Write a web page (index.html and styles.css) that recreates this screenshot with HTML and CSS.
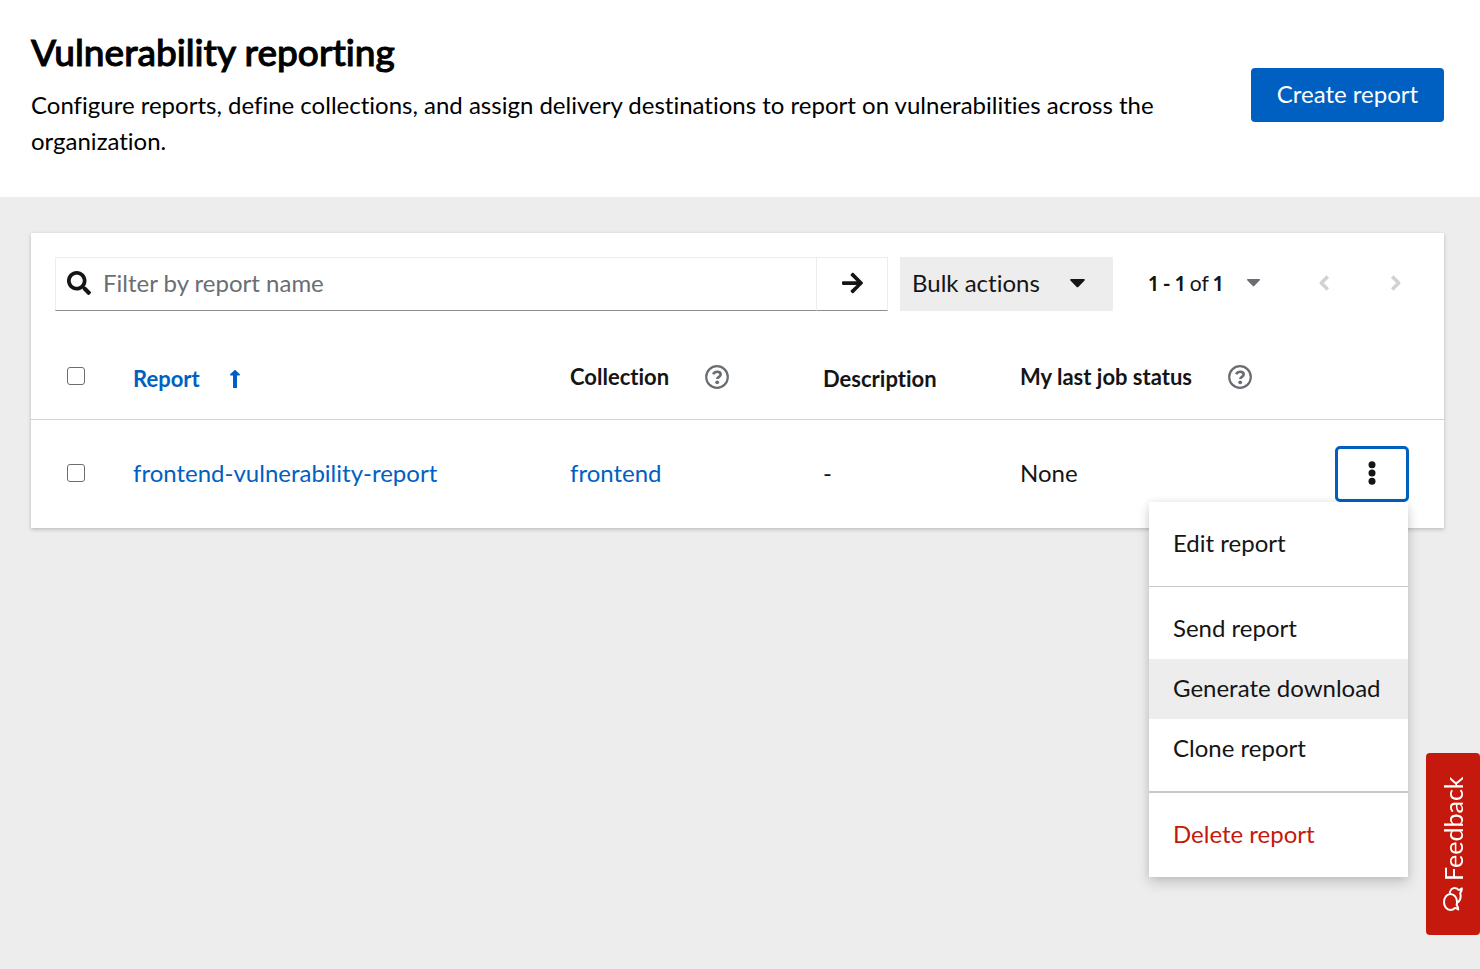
FILE: index.html
```html
<!DOCTYPE html>
<html lang="en">
<head>
<meta charset="utf-8">
<meta name="viewport" content="width=device-width, initial-scale=1">
<title>Vulnerability reporting</title>
<link rel="stylesheet" href="styles.css">
</head>
<body>
<header class="page-header">
  <div class="page-intro">
    <h1 class="page-title">Vulnerability reporting</h1>
    <p class="page-description">Configure reports, define collections, and assign delivery destinations to report on vulnerabilities across the organization.</p>
  </div>
  <button class="create-button" type="button">Create report</button>
</header>

<main class="page-main">
  <section class="card">
    <div class="toolbar">
      <form class="search">
        <label class="search-field">
          <svg class="search-icon" viewBox="0 0 512 512" width="24" height="24" fill="currentColor" aria-hidden="true"><path d="M505 442.700 405.300 343c-4.500-4.500-10.600-7-17-7H372c27.600-35.300 44-79.700 44-128C416 93.100 322.900 0 208 0S0 93.100 0 208s93.100 208 208 208c48.300 0 92.700-16.400 128-44v16.300c0 6.400 2.500 12.500 7 17l99.700 99.700c9.400 9.400 24.600 9.400 33.900 0l28.300-28.300c9.400-9.400 9.400-24.600.1-34zM208 336c-70.700 0-128-57.200-128-128 0-70.700 57.200-128 128-128 70.700 0 128 57.200 128 128 0 70.700-57.200 128-128 128z"/></svg>
          <input class="search-input" type="text" placeholder="Filter by report name" aria-label="Filter by report name">
        </label>
        <button class="search-submit" type="button" aria-label="Search">
          <svg viewBox="0 0 448 512" width="21" height="24" fill="currentColor" aria-hidden="true"><path d="M190.500 66.900l22.200-22.200c9.400-9.400 24.600-9.400 33.900 0L441 239c9.400 9.400 9.400 24.600 0 33.900L246.600 467.300c-9.400 9.400-24.600 9.400-33.900 0l-22.200-22.200c-9.500-9.500-9.300-25 .4-34.300L311.400 296H24c-13.300 0-24-10.700-24-24v-32c0-13.300 10.700-24 24-24h287.400L190.900 101.200c-9.800-9.300-10-24.800-.4-34.300z"/></svg>
        </button>
      </form>
      <button class="bulk-button" type="button">Bulk actions
        <svg viewBox="0 0 13 8" width="15" height="9" fill="currentColor" aria-hidden="true"><path d="M.8 0h11.400c.8 0 1.100.8.600 1.300L7.200 7.100c-.4.400-1 .4-1.400 0L.2 1.300C-.3.800 0 0 .8 0z"/></svg>
      </button>
      <nav class="pagination" aria-label="Pagination">
        <button class="page-range" type="button"><span><b>1 - 1</b> of <b>1</b></span>
          <svg class="range-caret" viewBox="0 0 13 8" width="13" height="8" fill="currentColor" aria-hidden="true"><path d="M.8 0h11.400c.8 0 1.100.8.600 1.300L7.200 7.100c-.4.400-1 .4-1.400 0L.2 1.300C-.3.800 0 0 .8 0z"/></svg>
        </button>
        <button class="page-step" type="button" disabled aria-label="Previous page">
          <svg viewBox="0 0 12 16" width="12" height="16" fill="none" stroke="currentColor" stroke-width="3.600" stroke-linecap="square" stroke-linejoin="round" aria-hidden="true"><path d="M8.500 2.800 3.300 8l5.200 5.200"/></svg>
        </button>
        <button class="page-step" type="button" disabled aria-label="Next page">
          <svg viewBox="0 0 12 16" width="12" height="16" fill="none" stroke="currentColor" stroke-width="3.600" stroke-linecap="square" stroke-linejoin="round" aria-hidden="true"><path d="M3.500 2.800 8.700 8l-5.200 5.200"/></svg>
        </button>
      </nav>
    </div>

    <table class="reports">
      <colgroup>
        <col class="col-check"><col class="col-report"><col class="col-collection"><col class="col-description"><col class="col-status"><col class="col-actions">
      </colgroup>
      <thead>
        <tr>
          <td class="check-cell"><input class="check" type="checkbox" aria-label="Select all reports"></td>
          <th class="plain-heading" scope="col"><button class="sort-button" type="button">Report
            <svg viewBox="0 0 10 18" width="10" height="18" fill="currentColor" aria-hidden="true"><path d="M3 17.400V5.600H1.100C.2 5.600-.2 4.600.4 4L4.400.3c.3-.4.900-.4 1.200 0l4 3.700c.6.600.2 1.600-.7 1.600H7v11.800c0 .3-.3.600-.6.600H3.600c-.3 0-.6-.3-.6-.6z"/></svg></button></th>
          <th scope="col"><span class="help-heading">Collection
            <button class="help-button" type="button" aria-label="About collections"><svg viewBox="0 0 24 24" width="24" height="24" fill="none" stroke="currentColor" aria-hidden="true"><circle cx="12" cy="12" r="10.800" stroke-width="2.200"/><path d="M8.200 9.200c.8-1.700 2.200-2.500 4-2.500 2 0 3.500 1.100 3.500 2.800 0 2.300-3.400 2.400-3.400 4.600" stroke-width="2.600"/><circle cx="12.200" cy="17.300" r="1.900" fill="currentColor" stroke="none"/></svg></button></span></th>
          <th class="plain-heading" scope="col">Description</th>
          <th scope="col"><span class="help-heading">My last job status
            <button class="help-button" type="button" aria-label="About job status"><svg viewBox="0 0 24 24" width="24" height="24" fill="none" stroke="currentColor" aria-hidden="true"><circle cx="12" cy="12" r="10.800" stroke-width="2.200"/><path d="M8.200 9.200c.8-1.700 2.200-2.500 4-2.500 2 0 3.500 1.100 3.500 2.800 0 2.300-3.400 2.400-3.400 4.600" stroke-width="2.600"/><circle cx="12.200" cy="17.300" r="1.900" fill="currentColor" stroke="none"/></svg></button></span></th>
          <td></td>
        </tr>
      </thead>
      <tbody>
        <tr>
          <td class="check-cell"><input class="check" type="checkbox" aria-label="Select frontend-vulnerability-report"></td>
          <td><a class="link" href="#report">frontend-vulnerability-report</a></td>
          <td><a class="link" href="#collection">frontend</a></td>
          <td>-</td>
          <td>None</td>
          <td class="actions-cell">
            <div class="actions">
              <button class="kebab" type="button" aria-label="Report actions" aria-expanded="true">
                <svg viewBox="0 0 8 24" width="8" height="24" fill="currentColor" aria-hidden="true"><circle cx="4" cy="3.700" r="3.500"/><circle cx="4" cy="12" r="3.500"/><circle cx="4" cy="20.300" r="3.500"/></svg>
              </button>
              <div class="menu" role="menu">
                <div class="menu-group">
                  <button class="menu-item" type="button" role="menuitem">Edit report</button>
                </div>
                <div class="menu-group">
                  <button class="menu-item" type="button" role="menuitem">Send report</button>
                  <button class="menu-item menu-item-active" type="button" role="menuitem">Generate download</button>
                  <button class="menu-item" type="button" role="menuitem">Clone report</button>
                </div>
                <div class="menu-group menu-group-danger">
                  <button class="menu-item menu-item-danger" type="button" role="menuitem">Delete report</button>
                </div>
              </div>
            </div>
          </td>
        </tr>
      </tbody>
    </table>
  </section>
</main>

<button class="feedback" type="button">
  <svg viewBox="0 -2 24 24" width="24" height="24" fill="none" stroke="currentColor" stroke-width="2" stroke-linejoin="round" aria-hidden="true"><path d="M9 1c4.500 0 8 2.700 8 6.500S13.500 14 9 14c-1 0-2-.1-2.900-.4-1.300 1-2.900 1.600-4.700 1.600.9-1 1.500-2.100 1.700-3.200C1.800 10.800 1 9.200 1 7.500 1 3.700 4.500 1 9 1z"/><path d="M17.600 6.600c3.100.6 5.400 2.600 5.400 5.200 0 1.600-.8 3-2.100 4 .2 1 .8 2.100 1.700 3-1.800 0-3.400-.6-4.700-1.600-.9.300-1.900.4-2.900.4-3 0-5.500-1.300-6.700-3.300"/></svg>
  Feedback
</button>
</body>
</html>
```
FILE: styles.css
```css
* {
  box-sizing: border-box;
}

body {
  margin: 0;
  min-height: 100vh;
  display: flex;
  flex-direction: column;
  background: #ededed;
  color: #151515;
  font: 400 24px/36px Lato, "Open Sans", sans-serif;
  font-variant-ligatures: none;
}

button,
input {
  margin: 0;
  font: inherit;
  color: inherit;
}

button {
  padding: 0;
  border: 0;
  background: none;
  cursor: pointer;
}

svg {
  display: block;
  flex: none;
}

.page-header {
  display: flex;
  align-items: center;
  justify-content: space-between;
  gap: 72px;
  padding: 29px 36px 36px 31px;
  background: #fff;
  color: #000;
}

.page-intro {
  padding-bottom: 2px;
}

.page-title {
  margin: 0 0 12px;
  font-size: 37px;
  font-weight: 500;
  line-height: 46px;
  -webkit-text-stroke: 1px currentColor;
}

.page-description {
  margin: 0;
}

.create-button {
  flex: none;
  min-width: 193px;
  padding: 8px 24px 10px;
  border-radius: 4px;
  background: #0060c2;
  color: #fff;
}

.page-main {
  flex: 1;
  padding: 36px 36px 36px 31px;
}

.card {
  background: #fff;
  box-shadow: 0 2px 4px rgba(3, 3, 3, 0.16), 0 0 3px rgba(3, 3, 3, 0.08);
}

.toolbar {
  display: flex;
  align-items: center;
  padding: 24px;
}

.search {
  flex: 1;
  display: flex;
  min-width: 0;
  height: 54px;
  margin-right: 12px;
}

.search-field {
  flex: 1;
  display: flex;
  align-items: center;
  gap: 12px;
  min-width: 0;
  padding: 0 0 2px 11px;
  border: 1px solid #ededed;
  border-right: 0;
  border-bottom-color: #8a8d90;
}

.search-input {
  flex: 1;
  min-width: 0;
  padding: 0;
  border: 0;
  outline: 0;
  background: none;
}

.search-input::placeholder {
  color: #6a6e73;
  opacity: 1;
}

.search-submit {
  display: flex;
  align-items: center;
  justify-content: center;
  width: 72px;
  padding-bottom: 2px;
  border: 1px solid #ededed;
  border-bottom-color: #8a8d90;
}

.bulk-button {
  display: flex;
  align-items: center;
  justify-content: space-between;
  width: 213px;
  height: 54px;
  padding: 0 28px 2px 12px;
  background: #ededed;
}

.pagination {
  display: flex;
  align-items: center;
  margin-left: 36px;
  padding-bottom: 2px;
}

.page-range {
  display: flex;
  align-items: center;
  justify-content: space-between;
  width: 111px;
  margin-right: 40px;
  font-size: 21px;
  font-variant-numeric: proportional-nums;
}

.page-range b {
  font-weight: 700;
}

.range-caret {
  color: #6a6e73;
}

.page-step {
  display: flex;
  justify-content: center;
  width: 48px;
  color: #d2d2d2;
}

.page-step + .page-step {
  margin-left: 24px;
}

.reports {
  width: 100%;
  border-collapse: collapse;
  table-layout: fixed;
}

.col-check {
  width: 78px;
}

.col-collection {
  width: 253px;
}

.col-description {
  width: 197px;
}

.col-status {
  width: 290px;
}

.col-actions {
  width: 158px;
}

.reports th,
.reports td {
  padding: 0 0 2px 24px;
  text-align: left;
}

.reports thead tr {
  height: 84px;
  border-bottom: 1px solid #d2d2d2;
}

.reports tbody tr {
  height: 109px;
}

.reports th {
  padding-bottom: 0;
  font-size: 22px;
  font-weight: 700;
}

.reports .plain-heading {
  padding-top: 4px;
}

.reports .check-cell {
  padding-left: 36px;
}

.check {
  appearance: none;
  display: block;
  width: 18px;
  height: 18px;
  border: 1px solid #6a6e73;
  border-radius: 3px;
  background: #fff;
}

.sort-button {
  display: flex;
  align-items: center;
  gap: 30px;
  color: #0060c2;
}

.help-heading {
  display: flex;
  align-items: center;
  gap: 36px;
}

.help-button {
  color: #6a6e73;
}

.link {
  color: #0060c2;
  text-decoration: none;
}

.reports .actions-cell {
  padding: 0 35px 0 0;
}

.actions {
  position: relative;
  width: 74px;
  margin-left: auto;
}

.kebab {
  display: flex;
  align-items: center;
  justify-content: center;
  width: 100%;
  height: 56px;
  padding-bottom: 2px;
  border: 3px solid #0060c2;
  border-radius: 5px;
}

.menu {
  position: absolute;
  top: 100%;
  right: 1px;
  width: 259px;
  background: #fff;
  box-shadow: 0 6px 12px rgba(3, 3, 3, 0.16), 0 0 8px rgba(3, 3, 3, 0.08);
}

.menu-group {
  padding: 12px 0;
}

.menu-group + .menu-group {
  border-top: 1px solid #c7c7c7;
}

.menu-group + .menu-group-danger {
  border-top-width: 2px;
}

.menu-item {
  display: block;
  width: 100%;
  padding: 11px 24px 13px;
  text-align: left;
  white-space: nowrap;
}

.menu-item-active {
  background: #ededed;
}

.menu-item-danger {
  color: #c4190c;
}

.feedback {
  position: fixed;
  right: 0;
  bottom: 34px;
  display: flex;
  align-items: center;
  gap: 6px;
  width: 54px;
  height: 182px;
  padding: 24px 0;
  border-radius: 4px;
  background: #c4190c;
  color: #fff;
  font-size: 25px;
  writing-mode: vertical-rl;
  transform: rotate(180deg);
}

.feedback svg {
  transform: rotate(90deg);
}
```
